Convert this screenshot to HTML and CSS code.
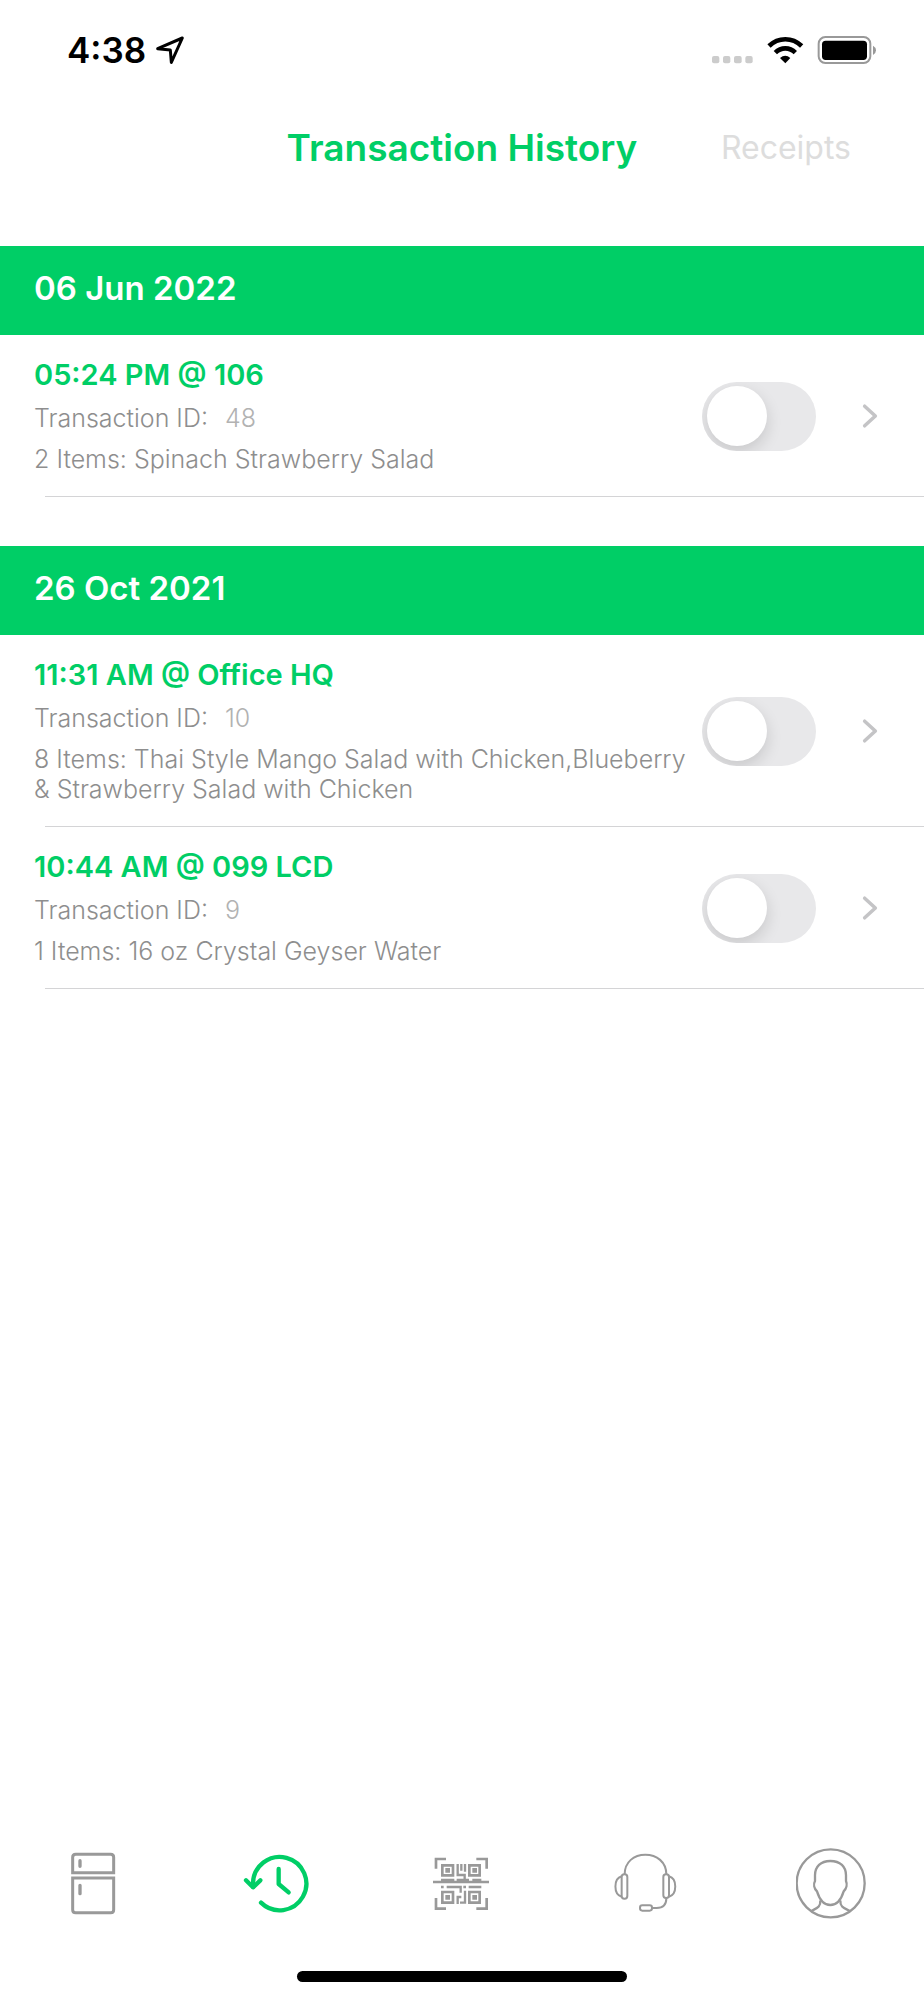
FILE: index.html
```html
<!DOCTYPE html>
<html lang="en">
<head>
<meta charset="utf-8">
<meta name="viewport" content="width=device-width, initial-scale=1">
<title>Transaction History</title>
<link rel="stylesheet" href="styles.css">
</head>
<body>
<div class="screen">
  <div class="status-bar">
    <span class="clock">4:38</span>
    <svg class="location" viewBox="345 78 90 90" aria-hidden="true"><path d="M353 119 L427 87 L394 160 L391 123 Z" fill="none" stroke="#000" stroke-width="9" stroke-linejoin="round"/></svg>
    <svg class="signals" viewBox="93 75 498 90" aria-hidden="true">
      <g fill="#ccc"><rect x="96" y="138" width="22" height="22" rx="6"/><rect x="129" y="138" width="22" height="22" rx="6"/><rect x="162" y="138" width="23" height="22" rx="6"/><rect x="196" y="138" width="22" height="22" rx="6"/></g>
      <g fill="none" stroke="#000" stroke-width="14"><path d="M267 108 C295 81 337 81 365 108"/><path d="M286 128 C303 111 329 111 346 128"/></g>
      <path d="M300 144 Q316 131 331 144 L316 160 Z"/>
      <rect x="416" y="81" width="155" height="78" rx="20" fill="none" stroke="#999" stroke-width="6"/>
      <rect x="426" y="92" width="135" height="58" rx="11"/>
      <path d="M579 107 Q588 112 588 121 Q588 130 579 135 Z" fill="#999"/>
    </svg>
  </div>

  <header class="tabs">
    <button class="tab tab-current" type="button">Transaction History</button>
    <button class="tab tab-other" type="button">Receipts</button>
  </header>

  <main class="history">
    <section class="day">
      <h2 class="date">06 Jun 2022</h2>
      <article class="entry">
        <div class="details">
          <h3 class="time" id="t48">05:24 PM @ 106</h3>
          <p class="line">Transaction ID: <span class="number">48</span></p>
          <p class="line">2 Items: Spinach Strawberry Salad</p>
        </div>
        <input class="switch" type="checkbox" role="switch" aria-labelledby="t48">
        <button class="open" type="button" aria-label="Open transaction 48"><svg class="chevron" viewBox="0 0 18 28"><path d="M3 3 15 14 3 25"/></svg></button>
      </article>
    </section>

    <section class="day">
      <h2 class="date">26 Oct 2021</h2>
      <article class="entry">
        <div class="details">
          <h3 class="time" id="t10">11:31 AM @ Office HQ</h3>
          <p class="line">Transaction ID: <span class="number">10</span></p>
          <p class="line">8 Items: Thai Style Mango Salad with Chicken,Blueberry &amp; Strawberry Salad with Chicken</p>
        </div>
        <input class="switch" type="checkbox" role="switch" aria-labelledby="t10">
        <button class="open" type="button" aria-label="Open transaction 10"><svg class="chevron" viewBox="0 0 18 28"><path d="M3 3 15 14 3 25"/></svg></button>
      </article>
      <article class="entry">
        <div class="details">
          <h3 class="time" id="t9">10:44 AM @ 099 LCD</h3>
          <p class="line">Transaction ID: <span class="number">9</span></p>
          <p class="line">1 Items: 16 oz Crystal Geyser Water</p>
        </div>
        <input class="switch" type="checkbox" role="switch" aria-labelledby="t9">
        <button class="open" type="button" aria-label="Open transaction 9"><svg class="chevron" viewBox="0 0 18 28"><path d="M3 3 15 14 3 25"/></svg></button>
      </article>
    </section>
  </main>

  <nav class="nav">
    <a class="nav-link" href="#fridge" aria-label="Fridge">
      <svg class="icon" viewBox="48 54 216 216" stroke-width="9">
        <path d="M98 128V82Q98 73 107 73H212Q221 73 221 82V128Z"/>
        <path d="M98 144H221V239Q221 248 212 248H107Q98 248 98 239Z"/>
        <path d="M120 92V109M120 166V191" stroke-width="10" stroke-linecap="round"/>
      </svg>
    </a>
    <a class="nav-link nav-active" href="#history" aria-label="History" aria-current="page">
      <svg class="icon" viewBox="603 54 216 216" stroke-width="13" stroke-linecap="round" stroke-linejoin="round">
        <path d="M639 170V161A80 80 0 1 1 663 218"/>
        <path d="M618 151 639 172 661 151"/>
        <path d="M716 117V162L746 187"/>
      </svg>
    </a>
    <a class="nav-link" href="#scan" aria-label="Scan">
      <svg class="icon" viewBox="48 54 216 216" stroke-width="8">
        <path d="M78 116V87H108M199 87H230V116M78 204V236H108M199 236H230V204"/>
        <path d="M69 156H237"/>
        <path d="M97 106H129V136H97ZM178 106H209V136H178ZM97 186H129V218H97ZM178 186H209V218H178Z"/>
        <path d="M106 121H120M187 121H201M106 202H120M187 202H201" stroke-width="14"/>
        <path d="M143 102V135H164V150M154 102V122M165 102V125M140 150H177M93 150H133M187 150H214" stroke-width="7"/>
        <path d="M93 171H101M110 171H152V188M160 171H168M176 171H214M143 222V201H154M165 182V218H150" stroke-width="7"/>
      </svg>
    </a>
    <a class="nav-link" href="#support" aria-label="Support">
      <svg class="icon" viewBox="63 54 216 216" stroke-width="6">
        <path d="M104 133C104 96 132 74 166 74S229 96 229 133"/>
        <rect x="95" y="133" width="17" height="73" rx="8"/>
        <rect x="220" y="133" width="17" height="71" rx="8"/>
        <path d="M95 139C70 146 70 193 95 200M237 139C262 146 262 193 237 200"/>
        <path d="M229 205C229 225 219 234 200 234H186"/>
        <rect x="150" y="226" width="36" height="16" rx="7"/>
      </svg>
    </a>
    <a class="nav-link" href="#profile" aria-label="Profile">
      <svg class="icon" viewBox="618 54 216 216" stroke-width="7">
        <circle cx="722" cy="160" r="102"/>
        <path d="M721 93C692 93 675 110 675 136V153C670 162 672 175 681 184C688 207 698 225 721 225S754 207 761 184C770 175 772 162 768 153V136C768 110 751 93 721 93Z"/>
        <path d="M691 211C692 232 681 234 664 243M751 211C750 232 762 234 780 243"/>
      </svg>
    </a>
  </nav>
  <div class="home-indicator"></div>
</div>
</body>
</html>
```

FILE: styles.css
```css
* {
  box-sizing: border-box;
}

body {
  margin: 0;
  background: #fff;
  font-family: Inter, "Liberation Sans", sans-serif;
}

h2,
h3,
p {
  margin: 0;
}

button {
  padding: 0;
  border: 0;
  background: none;
  font-family: inherit;
}

.screen {
  display: flex;
  flex-direction: column;
  min-height: 100vh;
}

.status-bar {
  display: flex;
  align-items: center;
  height: 100px;
  padding: 0 47px 0 67px;
}

.clock {
  font-size: 35px;
  font-weight: 600;
  line-height: 40px;
}

.location {
  width: 30px;
  height: 30px;
  margin-left: 9px;
}

.signals {
  width: 166px;
  height: 30px;
  margin-left: auto;
}

.tabs {
  display: grid;
  grid-template-columns: 1fr auto 1fr;
  align-items: center;
  height: 96px;
  margin-bottom: 50px;
}

.tab {
  line-height: 44px;
}

.tab-current {
  grid-column: 2;
  color: #00ce66;
  font-size: 37px;
  font-weight: 600;
}

.tab-other {
  justify-self: end;
  margin-right: 73px;
  color: #ddd;
  font-size: 32px;
  font-weight: 400;
}

.day {
  margin-bottom: 49px;
}

.date {
  padding: 22px 34px 27px;
  background: #00ce66;
  color: #fff;
  font-size: 33px;
  font-weight: 600;
  line-height: 40px;
}

.entry {
  display: flex;
  align-items: center;
  padding: 23px 46px 23px 34px;
  background: linear-gradient(#d4d4d6, #d4d4d6) 45px 100% / 100% 1px no-repeat;
}

.details {
  display: grid;
  flex: 1;
  gap: 11px;
}

.time {
  color: #00ce66;
  font-size: 29px;
  font-weight: 600;
  line-height: 34px;
}

.line {
  color: #8e8e8e;
  font-size: 25px;
  font-weight: 300;
  line-height: 30px;
}

.number {
  margin-left: 10px;
  color: #b2b2b2;
}

.switch {
  display: flex;
  flex: none;
  width: 114px;
  height: 69px;
  margin: 0 46px 0 16px;
  padding: 4px 5px;
  overflow: hidden;
  appearance: none;
  border-radius: 35px;
  background: #e8e8ea;
}

.switch::before {
  content: "";
  width: 60px;
  height: 60px;
  border-radius: 50%;
  background: #fff;
  box-shadow: 0 6px 16px rgba(0, 0, 0, 0.14);
}

.switch:checked {
  justify-content: flex-end;
  background: #00ce66;
}

.open {
  display: flex;
}

.chevron {
  width: 16px;
  height: 28px;
  overflow: visible;
  fill: none;
  stroke: #c4c4c6;
  stroke-width: 4;
  stroke-linecap: round;
  stroke-linejoin: round;
}

.nav {
  display: grid;
  grid-template-columns: repeat(5, 1fr);
  margin-top: auto;
  padding-bottom: 51px;
}

.nav-link {
  display: flex;
  justify-content: center;
  color: #999;
}

.nav-active {
  color: #00ce66;
}

.icon {
  width: 72px;
  height: 72px;
  fill: none;
  stroke: currentColor;
}

.home-indicator {
  align-self: center;
  width: 330px;
  height: 11px;
  margin-bottom: 18px;
  border-radius: 6px;
  background: #000;
}
```
